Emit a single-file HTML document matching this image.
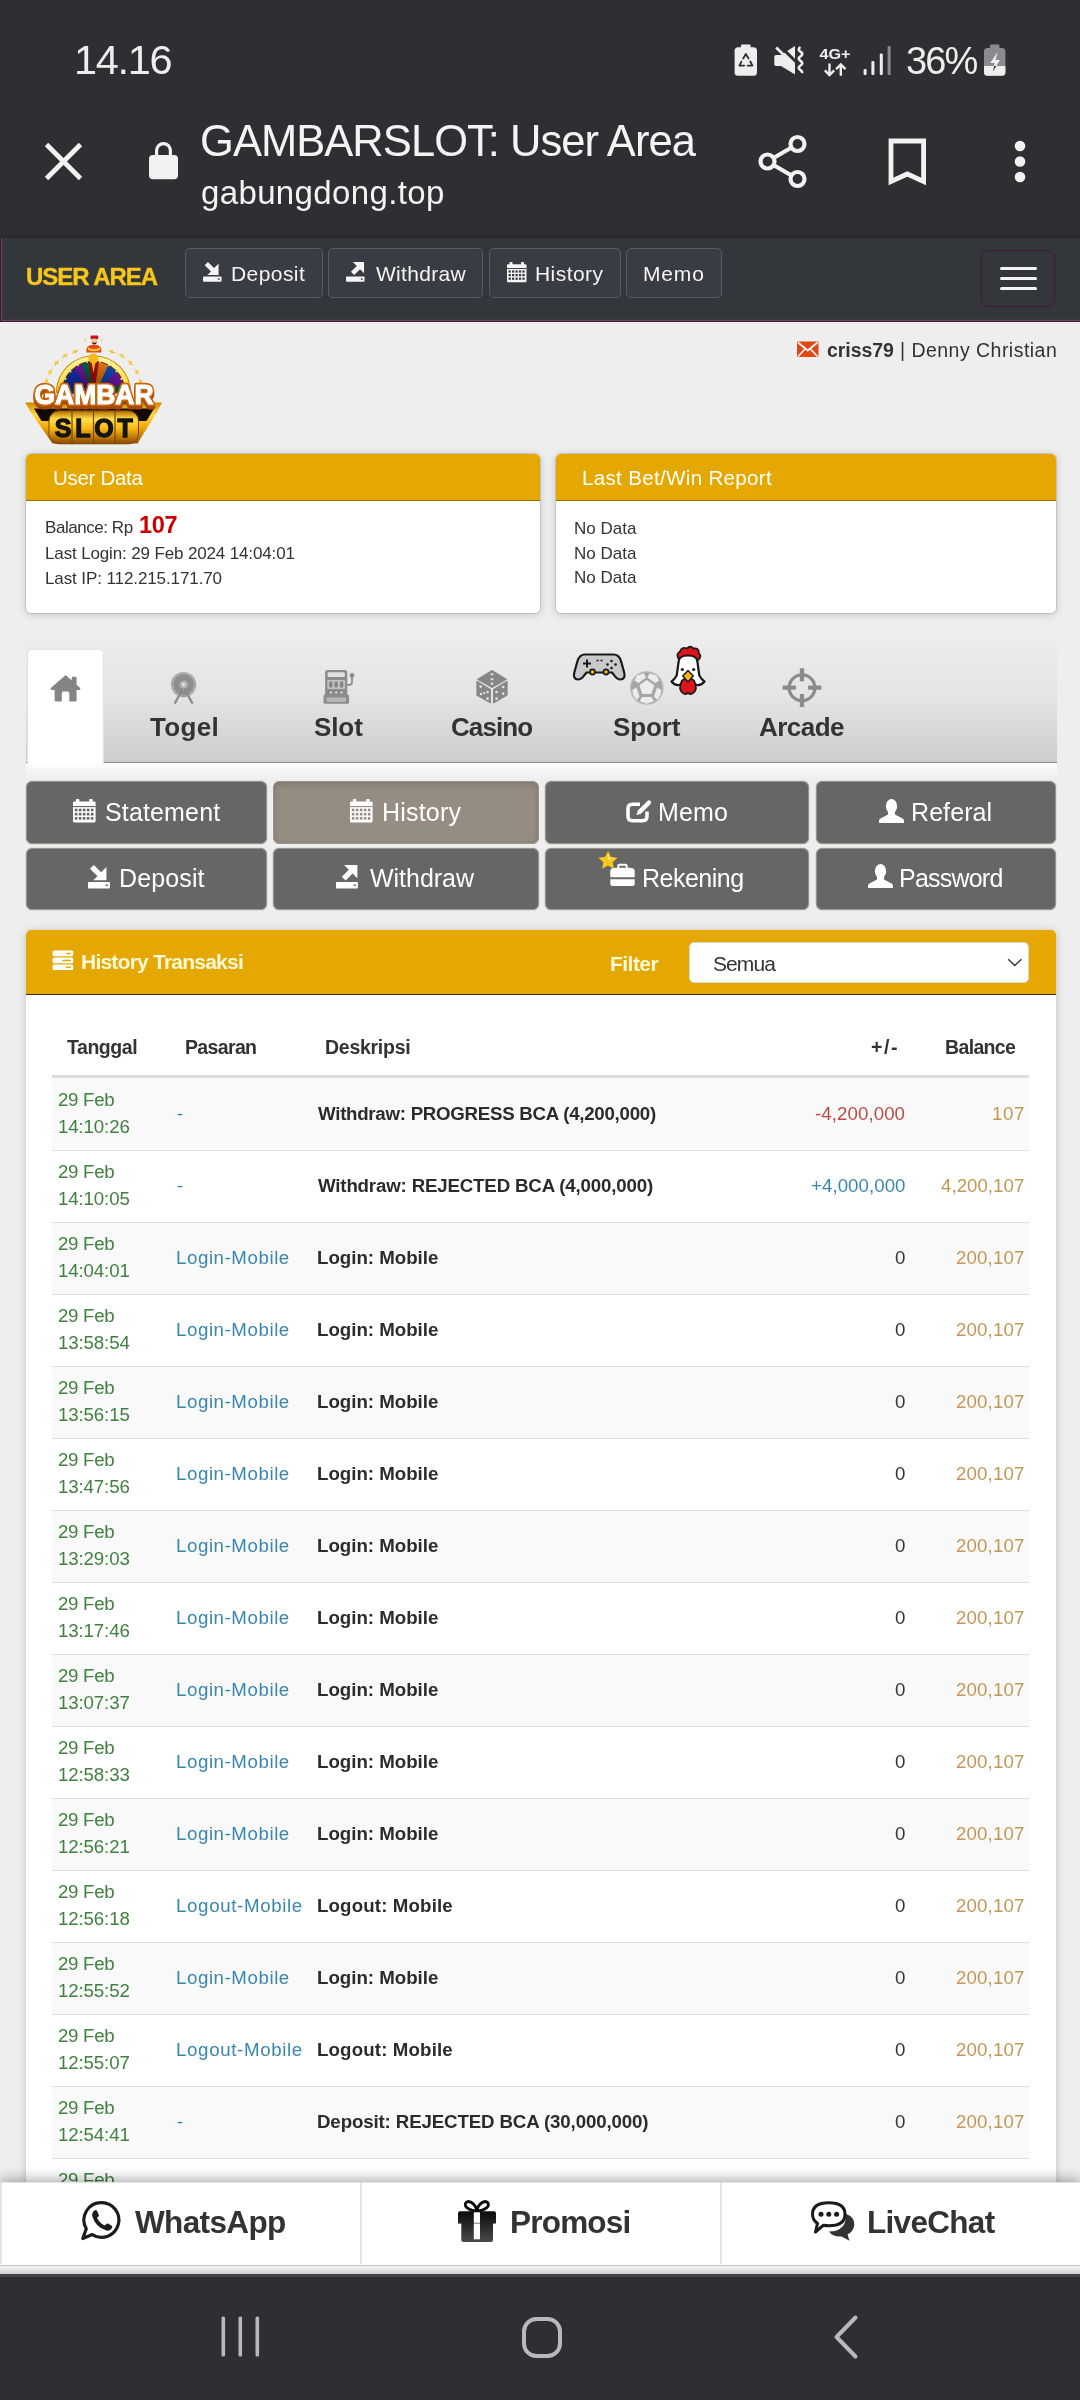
<!DOCTYPE html>
<html lang="id"><head><meta charset="utf-8"><title>GAMBARSLOT: User Area</title>
<style>
*{box-sizing:border-box;margin:0;padding:0}
html,body{width:1080px;height:2400px;overflow:hidden;background:#eeeeee}
body{position:relative;font-family:'Liberation Sans',sans-serif;color:#333}
.abs{position:absolute}
svg{position:absolute;overflow:visible;will-change:transform}
.nb{position:absolute;top:248px;height:50px;background:#3a3c43;border:1px solid #575b64;border-radius:5px}
.mb{position:absolute;background:#666;border:1px solid #9a948c;border-radius:6px;box-shadow:0 0 0 0.6px #d8d0c6}
.row{position:absolute;left:52px;width:977px;height:72px;border-top:1px solid #ddd}
.row.o{background:#f9f9f9}
</style></head><body>

<div class="abs" style="left:0;top:0;width:1080px;height:237px;background:#2e2f33"></div>
<div class="abs" style="left:0;top:234.500px;width:1080px;height:3.300px;background:#2a2b2e"></div>
<div style="position:absolute;will-change:transform;top:36.20px;font-size:41.5px;line-height:47px;height:47px;color:#eeeeee;white-space:pre;letter-spacing:-1.32px;left:74.49px;">14.16</div>
<div style="position:absolute;will-change:transform;top:39.60px;font-size:38px;line-height:42px;height:42px;color:#eeeeee;white-space:pre;letter-spacing:-1.92px;left:906.08px;">36%</div>
<svg style="left:730px;top:40px" width="290" height="40" viewBox="730 40 290 40">
<g fill="#eeeeee">
<rect x="741" y="44.4" width="9.6" height="4" rx="1"/>
<rect x="734.6" y="47.2" width="22.4" height="28.6" rx="3.5"/>
</g>
<g fill="none" stroke="#2e2f33" stroke-width="1.8" stroke-linejoin="round" stroke-linecap="round">
<path d="M743.2 58.5 L745.8 54 L748.6 58.6"/><path d="M750.3 61.5 L752.4 65.6 L747.6 65.6"/><path d="M744.2 65.6 L739.4 65.6 L741.4 61.6"/>
</g>
<g fill="#eeeeee">
<path d="M776 55 H781 L795 46 V74.600 L781 66 H776 Q774.300 66 774.300 64.300 V56.700 Q774.300 55 776 55 Z"/>
</g>
<path d="M778.600 44.600 L797.500 63.200" stroke="#2e2f33" stroke-width="3" fill="none"/>
<path d="M776.200 47.600 L786 57.200" stroke="#eeeeee" stroke-width="2.800" fill="none"/>
<path d="M800.500 47 q-3.600 2.400 0 4.700 q3.600 2.300 0 4.600 q-3.600 2.300 0 4.600 q3.600 2.300 0 4.600 q-3.600 2.300 0 4.600 q2 1.300 1.500 3" stroke="#eeeeee" stroke-width="2.600" fill="none"/>
<text x="819.5" y="58.8" font-family="Liberation Sans, sans-serif" font-weight="700" font-size="15.4" fill="#eeeeee" textLength="31" lengthAdjust="spacingAndGlyphs">4G+</text>
<g stroke="#eeeeee" stroke-width="2.4" fill="none" stroke-linecap="butt" stroke-linejoin="miter">
<path d="M829.5 63.5 V74.5 M824.8 70.3 L829.5 75 L834.2 70.3"/>
<path d="M840.8 75.8 V65 M836.1 69.2 L840.8 64.5 L845.5 69.2"/>
</g>
<g fill="#eeeeee">
<rect x="863.6" y="68.9" width="3" height="6" rx="1"/>
<rect x="871.4" y="61" width="3" height="13.9" rx="1"/>
<rect x="879.8" y="53.6" width="3" height="21.3" rx="1"/>
</g>
<rect x="887.6" y="46" width="3" height="28.9" rx="1" fill="#8a8b8e"/>
<g>
<rect x="990" y="44.4" width="9.4" height="5" rx="1" fill="#8a8b8e"/>
<rect x="984" y="48" width="21.4" height="27.8" rx="3.5" fill="#8a8b8e"/>
<path d="M984 66 H1005.4 V72.3 a3.5 3.5 0 0 1 -3.5 3.5 H987.5 a3.5 3.5 0 0 1 -3.5 -3.5 Z" fill="#eeeeee"/>
<path d="M997.5 52 L990.3 63 H994.6 L992.8 71.5 L1000 60 H995.6 Z" fill="#eeeeee"/>
<path d="M994.3 66 L992.8 71.5 L996.4 66 Z" fill="#2e2f33"/>
</g>
</svg>
<svg style="left:40px;top:130px" width="1040" height="70" viewBox="40 130 1040 70">
<path d="M46.5 144.5 L80.5 178.5 M80.5 144.5 L46.5 178.5" stroke="#f2f2f2" stroke-width="4.8" fill="none"/>
<rect x="149" y="155" width="29" height="24.3" rx="4" fill="#f2f2f2"/>
<path d="M156.6 156 V150.5 a6.9 6.9 0 0 1 13.8 0 V156" stroke="#f2f2f2" stroke-width="3.2" fill="none"/>
<g stroke="#f2f2f2" stroke-width="4.2" fill="none">
<path d="M767.5 161.5 L797.5 144 M767.5 161.5 L797.5 179"/>
<circle cx="797.5" cy="144" r="7" fill="#2e2f33"/><circle cx="767.5" cy="161.5" r="7" fill="#2e2f33"/><circle cx="797.5" cy="179" r="7" fill="#2e2f33"/>
</g>
<path d="M891 141 H923.6 V181.5 L907.3 174 L891 181.5 Z" stroke="#f2f2f2" stroke-width="4.8" fill="none" stroke-linejoin="miter"/>
<g fill="#f2f2f2"><circle cx="1020" cy="146" r="5.3"/><circle cx="1020" cy="161.5" r="5.3"/><circle cx="1020" cy="177" r="5.3"/></g>
</svg>
<div style="position:absolute;will-change:transform;top:116.80px;font-size:43.5px;line-height:48px;height:48px;color:#f4f4f4;white-space:pre;letter-spacing:-0.95px;left:200.12px;">GAMBARSLOT: User Area</div>
<div style="position:absolute;will-change:transform;top:173.70px;font-size:33px;line-height:37px;height:37px;color:#f4f4f4;white-space:pre;letter-spacing:0.36px;left:201.08px;">gabungdong.top</div>
<div class="abs" style="left:0;top:237.800px;width:1080px;height:84px;background:#33363b;border-bottom:1px solid #3d1a30;border-left:1px solid #3d1a30;box-shadow:inset 1.200px -1.200px 0 #65475a"></div>
<div style="position:absolute;will-change:transform;top:262.90px;font-size:24px;line-height:27px;height:27px;color:#f7c61b;white-space:pre;font-weight:700;letter-spacing:-1.05px;left:26.46px;-webkit-text-stroke:0.35px #f7c61b;">USER AREA</div>
<div class="nb" style="left:185.3px;width:137.39999999999998px"></div>
<div class="nb" style="left:328.3px;width:155.0px"></div>
<div class="nb" style="left:488.8px;width:132.40000000000003px"></div>
<div class="nb" style="left:626.3px;width:95.70000000000005px"></div>
<div style="position:absolute;will-change:transform;top:262.00px;font-size:21px;line-height:23px;height:23px;color:#f4f4f4;white-space:pre;letter-spacing:0.43px;left:230.62px;">Deposit</div>
<div style="position:absolute;will-change:transform;top:262.00px;font-size:21px;line-height:23px;height:23px;color:#f4f4f4;white-space:pre;letter-spacing:0.3px;left:375.75px;">Withdraw</div>
<div style="position:absolute;will-change:transform;top:262.00px;font-size:21px;line-height:23px;height:23px;color:#f4f4f4;white-space:pre;letter-spacing:0.44px;left:535.02px;">History</div>
<div style="position:absolute;will-change:transform;top:262.00px;font-size:21px;line-height:23px;height:23px;color:#f4f4f4;white-space:pre;letter-spacing:0.83px;left:643.32px;">Memo</div>
<svg style="left:202.7px;top:262px" width="19" height="19.95" viewBox="0 0 20 21">
<rect x="0" y="15.2" width="19.5" height="5.6" rx="0.8" fill="#f4f4f4"/>
<rect x="15.6" y="17.3" width="2" height="1.4" fill="#3a3c43"/>
<path d="M1.800 3.400 L5.200 0 L11.600 6.400 L16.400 1.800 V13.600 H4.600 L8.400 10 Z" fill="#f4f4f4"/>
</svg>
<svg style="left:346px;top:262px" width="19" height="19.95" viewBox="0 0 20 21">
<rect x="0" y="15.2" width="19.5" height="5.6" rx="0.8" fill="#f4f4f4"/>
<rect x="15.6" y="17.3" width="2" height="1.4" fill="#3a3c43"/>
<path d="M7.200 0 H19 V11.800 L14.800 7.600 L8.600 13.800 L5.200 10.400 L11.400 4.200 Z" fill="#f4f4f4"/>
</svg>
<svg style="left:507px;top:262px" width="19.5" height="20.475" viewBox="0 0 20 21">
<rect x="2.6" y="0" width="3" height="4" rx="0.6" fill="#f4f4f4"/><rect x="14.4" y="0" width="3" height="4" rx="0.6" fill="#f4f4f4"/>
<rect x="0" y="2.2" width="20" height="18.6" rx="1" fill="#f4f4f4"/>
<rect x="0" y="6.2" width="20" height="1" fill="#3a3c43"/>
<rect x="1.60" y="8.60" width="2.3" height="2.3" fill="#3a3c43"/><rect x="5.15" y="8.60" width="2.3" height="2.3" fill="#3a3c43"/><rect x="8.70" y="8.60" width="2.3" height="2.3" fill="#3a3c43"/><rect x="12.25" y="8.60" width="2.3" height="2.3" fill="#3a3c43"/><rect x="15.80" y="8.60" width="2.3" height="2.3" fill="#3a3c43"/><rect x="1.60" y="12.30" width="2.3" height="2.3" fill="#3a3c43"/><rect x="5.15" y="12.30" width="2.3" height="2.3" fill="#3a3c43"/><rect x="8.70" y="12.30" width="2.3" height="2.3" fill="#3a3c43"/><rect x="12.25" y="12.30" width="2.3" height="2.3" fill="#3a3c43"/><rect x="15.80" y="12.30" width="2.3" height="2.3" fill="#3a3c43"/><rect x="1.60" y="16.00" width="2.3" height="2.3" fill="#3a3c43"/><rect x="5.15" y="16.00" width="2.3" height="2.3" fill="#3a3c43"/><rect x="8.70" y="16.00" width="2.3" height="2.3" fill="#3a3c43"/><rect x="12.25" y="16.00" width="2.3" height="2.3" fill="#3a3c43"/><rect x="15.80" y="16.00" width="2.3" height="2.3" fill="#3a3c43"/>
</svg>
<div class="abs" style="left:980.600px;top:249.700px;width:74.400px;height:57px;border:1.300px solid #42192f;border-radius:7px;background:#33363b"></div>
<div class="abs" style="left:1000px;top:267px;width:36.5px;height:3.4px;background:#f4f4f4;border-radius:1.5px"></div>
<div class="abs" style="left:1000px;top:277px;width:36.5px;height:3.4px;background:#f4f4f4;border-radius:1.5px"></div>
<div class="abs" style="left:1000px;top:287px;width:36.5px;height:3.4px;background:#f4f4f4;border-radius:1.5px"></div>
<svg style="left:20px;top:330px" width="150" height="120" viewBox="20 330 150 120">
<defs>
<linearGradient id="gold" x1="0" y1="0" x2="0" y2="1"><stop offset="0" stop-color="#ffe763"/><stop offset="0.5" stop-color="#f3ae0e"/><stop offset="1" stop-color="#b86a00"/></linearGradient>
<linearGradient id="gold2" x1="0" y1="0" x2="0" y2="1"><stop offset="0" stop-color="#d28600"/><stop offset="0.3" stop-color="#ffd83e"/><stop offset="0.6" stop-color="#f3a90c"/><stop offset="1" stop-color="#9a5200"/></linearGradient>
<linearGradient id="gold3" x1="0" y1="0" x2="0" y2="1"><stop offset="0" stop-color="#b06a00"/><stop offset="0.25" stop-color="#ffdf4a"/><stop offset="0.55" stop-color="#f7b512"/><stop offset="1" stop-color="#8a4800"/></linearGradient>
<linearGradient id="ring" x1="0" y1="0" x2="0" y2="1"><stop offset="0" stop-color="#fff7a8"/><stop offset="0.6" stop-color="#ffe45c"/><stop offset="1" stop-color="#f0b020"/></linearGradient>
<radialGradient id="wsh" cx="0.5" cy="1" r="1"><stop offset="0" stop-color="#000" stop-opacity="0.45"/><stop offset="1" stop-color="#000" stop-opacity="0"/></radialGradient>
</defs>
<path transform="translate(46.4 381.5) rotate(286)" d="M-4.300 1 L0.700 -2.400 L0.100 -0.400 L4.300 -1 L-0.700 2.400 L-0.100 0.400 Z" fill="#f3c01c"/><path transform="translate(50.2 372.0) rotate(298)" d="M-4.300 1 L0.700 -2.400 L0.100 -0.400 L4.300 -1 L-0.700 2.400 L-0.100 0.400 Z" fill="#f3c01c"/><path transform="translate(56.5 362.9) rotate(311)" d="M-4.300 1 L0.700 -2.400 L0.100 -0.400 L4.300 -1 L-0.700 2.400 L-0.100 0.400 Z" fill="#f3c01c"/><path transform="translate(65.0 355.8) rotate(324)" d="M-4.300 1 L0.700 -2.400 L0.100 -0.400 L4.300 -1 L-0.700 2.400 L-0.100 0.400 Z" fill="#f3c01c"/><path transform="translate(75.1 351.7) rotate(337)" d="M-4.300 1 L0.700 -2.400 L0.100 -0.400 L4.300 -1 L-0.700 2.400 L-0.100 0.400 Z" fill="#f3c01c"/><path transform="translate(111.9 351.7) rotate(383)" d="M-4.300 1 L0.700 -2.400 L0.100 -0.400 L4.300 -1 L-0.700 2.400 L-0.100 0.400 Z" fill="#f3c01c"/><path transform="translate(122.0 355.8) rotate(396)" d="M-4.300 1 L0.700 -2.400 L0.100 -0.400 L4.300 -1 L-0.700 2.400 L-0.100 0.400 Z" fill="#f3c01c"/><path transform="translate(130.5 362.9) rotate(409)" d="M-4.300 1 L0.700 -2.400 L0.100 -0.400 L4.300 -1 L-0.700 2.400 L-0.100 0.400 Z" fill="#f3c01c"/><path transform="translate(136.8 372.0) rotate(422)" d="M-4.300 1 L0.700 -2.400 L0.100 -0.400 L4.300 -1 L-0.700 2.400 L-0.100 0.400 Z" fill="#f3c01c"/><path transform="translate(140.6 381.5) rotate(434)" d="M-4.300 1 L0.700 -2.400 L0.100 -0.400 L4.300 -1 L-0.700 2.400 L-0.100 0.400 Z" fill="#f3c01c"/>
<path d="M55.800 393 A37.700 37.700 0 0 1 131.200 393 Z" fill="#c88a08"/>
<path d="M56.800 393 A36.700 36.700 0 0 1 130.200 393 Z" fill="url(#ring)"/>
<path d="M61.300 393 A32.200 32.200 0 0 1 125.700 393 Z" fill="#5e3400"/>
<path d="M93.5 398 L63.3 392.0 A30.2 30.2 0 0 1 74.6 368.5 Z" fill="#1430a8"/><path d="M93.5 398 L74.6 368.5 A30.2 30.2 0 0 1 81.6 364.2 Z" fill="#6a14a6"/><path d="M93.5 398 L81.6 364.2 A30.2 30.2 0 0 1 89.1 362.1 Z" fill="#0b5a40"/><path d="M93.5 398 L89.1 362.1 A30.2 30.2 0 0 1 98.9 362.3 Z" fill="#a80e10"/><path d="M93.5 398 L98.9 362.3 A30.2 30.2 0 0 1 108.2 365.6 Z" fill="#e27412"/><path d="M93.5 398 L108.2 365.6 A30.2 30.2 0 0 1 115.9 371.7 Z" fill="#1248b4"/><path d="M93.5 398 L115.9 371.7 A30.2 30.2 0 0 1 122.4 383.2 Z" fill="#7416ac"/><path d="M93.5 398 L122.4 383.2 A30.2 30.2 0 0 1 123.7 392.0 Z" fill="#0f6a3a"/>
<path d="M63.300 392 A30.200 30.200 0 0 1 123.700 392 Z" fill="url(#wsh)"/>
<circle cx="65.6" cy="379.0" r="0.9" fill="#fff3c0"/><circle cx="70.6" cy="371.4" r="0.9" fill="#fff3c0"/><circle cx="78.1" cy="365.3" r="0.9" fill="#fff3c0"/><circle cx="87.1" cy="361.9" r="0.9" fill="#fff3c0"/><circle cx="99.9" cy="361.9" r="0.9" fill="#fff3c0"/><circle cx="108.9" cy="365.3" r="0.9" fill="#fff3c0"/><circle cx="116.4" cy="371.4" r="0.9" fill="#fff3c0"/><circle cx="121.4" cy="379.0" r="0.9" fill="#fff3c0"/>
<circle cx="93.500" cy="358.500" r="5" fill="#f7b714"/>
<path d="M91.500 361.500 L93.500 373 L95.500 361.500 Z" fill="#f7b714"/>
<g>
<path d="M84.500 338.500 l1.600 1 l-1 0.600 l1.300 1.500 l-2.400 -1.100 l1 -0.700 Z M102.500 338.500 l-1.600 1 l1 0.600 l-1.300 1.500 l2.400 -1.100 l-1 -0.700 Z" fill="#f3c01c"/>
<rect x="90.600" y="335.600" width="7.600" height="3.600" rx="0.800" fill="#c8141a"/>
<circle cx="94.300" cy="341.600" r="3.100" fill="#f3c29a"/>
<path d="M91.500 342.200 Q94.300 346.600 97.100 342.200 Q94.300 343.400 91.500 342.200 Z" fill="#2a1a10"/>
<path d="M86.300 352.600 Q85.300 344.600 94 344.800 Q102.500 344.600 101.300 352.600 Z" fill="#e2481a"/>
<path d="M88 347.600 Q94 350.800 100 347.600 L100 350 Q94 352.400 88 350 Z" fill="#f6c62a"/>
</g>
<path d="M25.300 402.500 H162 L157 412 L137.500 443.500 H52.500 L30.500 412 Z" fill="url(#gold2)"/>
<path d="M34 408.500 H154 L146.500 421 H41.500 Z" fill="#120a00"/>
<rect x="49" y="410.800" width="89.500" height="33" rx="10" fill="url(#gold3)" stroke="#7a4600" stroke-width="1"/>
<g stroke="#7a4600" stroke-width="1.200"><path d="M72 411.500 V443.500 M93.500 411 V443.800 M115 411.500 V443.500"/></g>
<text x="93.700" y="437" text-anchor="middle" font-family="Liberation Sans, sans-serif" font-weight="700" font-size="25" fill="#141414" stroke="#141414" stroke-width="1.300" textLength="78" lengthAdjust="spacing">SLOT</text>
<text x="94" y="406.800" text-anchor="middle" font-family="Liberation Sans, sans-serif" font-weight="700" font-size="28.500" fill="#a4480a" stroke="#a4480a" stroke-width="5" stroke-linejoin="round" textLength="119" lengthAdjust="spacingAndGlyphs">GAMBAR</text>
<text x="94" y="404" text-anchor="middle" font-family="Liberation Sans, sans-serif" font-weight="700" font-size="28.500" fill="#ffffff" stroke="#c8650f" stroke-width="4.600" paint-order="stroke" stroke-linejoin="round" textLength="119" lengthAdjust="spacingAndGlyphs">GAMBAR</text>
<text x="94" y="404" text-anchor="middle" font-family="Liberation Sans, sans-serif" font-weight="700" font-size="28.500" fill="#ffffff" stroke="#ffffff" stroke-width="1.100" stroke-linejoin="round" textLength="119" lengthAdjust="spacingAndGlyphs">GAMBAR</text>
</svg>
<svg style="left:797px;top:341px" width="22" height="17" viewBox="0 0 22 17">
<rect x="0" y="0.500" width="21.500" height="15.500" rx="1" fill="#dd4814"/>
<path d="M1 1.500 L10.750 9.500 L20.500 1.500" stroke="#eeeeee" stroke-width="2" fill="none"/>
<path d="M1 15.500 L8 8 M20.500 15.500 L13.500 8" stroke="#eeeeee" stroke-width="1.800" fill="none"/>
</svg>
<div style="position:absolute;will-change:transform;top:339.20px;font-size:19.5px;line-height:22px;height:22px;color:#333;white-space:pre;font-weight:700;letter-spacing:-0.05px;left:826.77px;">criss79</div>
<div style="position:absolute;will-change:transform;top:339.20px;font-size:19.5px;line-height:22px;height:22px;color:#333;white-space:pre;letter-spacing:0.47px;left:899.59px;">| Denny Christian</div>
<div class="abs" style="left:26px;top:453.5px;width:514px;height:159.0px;background:#fff;border-radius:5px;box-shadow:0 1px 8px rgba(0,0,0,0.2),0 0 0 1px rgba(0,0,0,0.1);overflow:hidden"><div style="height:47px;background:#e5a802;border-bottom:1.5px solid #9a7000"></div></div>
<div class="abs" style="left:556px;top:453.5px;width:499.5px;height:159.0px;background:#fff;border-radius:5px;box-shadow:0 1px 8px rgba(0,0,0,0.2),0 0 0 1px rgba(0,0,0,0.1);overflow:hidden"><div style="height:47px;background:#e5a802;border-bottom:1.5px solid #9a7000"></div></div>
<div style="position:absolute;will-change:transform;top:466.00px;font-size:20.5px;line-height:23px;height:23px;color:#fff;white-space:pre;letter-spacing:-0.3px;left:53.00px;">User Data</div>
<div style="position:absolute;will-change:transform;top:466.00px;font-size:20.5px;line-height:23px;height:23px;color:#fff;white-space:pre;letter-spacing:0.35px;left:581.50px;">Last Bet/Win Report</div>
<div style="position:absolute;will-change:transform;top:517.50px;font-size:17px;line-height:19px;height:19px;color:#333;white-space:pre;letter-spacing:-0.45px;left:44.50px;">Balance: Rp</div>
<div style="position:absolute;will-change:transform;top:511.50px;font-size:23.5px;line-height:26px;height:26px;color:#cc0000;white-space:pre;font-weight:700;letter-spacing:-0.3px;left:139.00px;">107</div>
<div style="position:absolute;will-change:transform;top:544.00px;font-size:17px;line-height:19px;height:19px;color:#333;white-space:pre;letter-spacing:-0.14px;left:44.50px;">Last Login: 29 Feb 2024 14:04:01</div>
<div style="position:absolute;will-change:transform;top:569.00px;font-size:17px;line-height:19px;height:19px;color:#333;white-space:pre;letter-spacing:-0.1px;left:44.50px;">Last IP: 112.215.171.70</div>
<div style="position:absolute;will-change:transform;top:518.50px;font-size:17px;line-height:19px;height:19px;color:#333;white-space:pre;left:573.50px;">No Data</div>
<div style="position:absolute;will-change:transform;top:543.50px;font-size:17px;line-height:19px;height:19px;color:#333;white-space:pre;left:573.50px;">No Data</div>
<div style="position:absolute;will-change:transform;top:567.50px;font-size:17px;line-height:19px;height:19px;color:#333;white-space:pre;left:573.50px;">No Data</div>
<div class="abs" style="left:26px;top:637px;width:1030.500px;height:126px;background:linear-gradient(#eeeeee,#eaeaea 10%,#e5e5e5 45%,#cdcdcd);border-bottom:1.500px solid #8c8c8c"></div>
<div class="abs" style="left:26px;top:763px;width:1030.500px;height:17px;background:linear-gradient(#ffffff,#f6f6f6 40%,#eeeeee)"></div>
<div class="abs" style="left:26.500px;top:648.500px;width:77px;height:115px;background:#fff;border-radius:5px 5px 0 0;border:1px solid #e2e2e2;border-bottom:none"></div>
<svg style="left:48px;top:672px" width="36" height="32" viewBox="48 672 36 32">
<path d="M65.600 675 L50.800 688 Q50 690 52.500 690 H54.600 V700 Q54.600 701.600 56.200 701.600 H61.800 V693 Q61.800 691.400 63.400 691.400 H67.700 Q69.300 691.400 69.300 693 V701.600 H75 Q76.600 701.600 76.600 700 V690 H78.500 Q81 690 80.100 688 L76.600 684.800 V678 Q76.600 676.700 75 676.700 H73.300 Q71.700 676.700 71.700 678 V680.500 Z" fill="#848484"/>
</svg>
<div style="position:absolute;will-change:transform;top:711.90px;font-size:26px;line-height:30px;height:30px;color:#333;white-space:pre;font-weight:700;letter-spacing:0.34px;left:149.74px;">Togel</div>
<div style="position:absolute;will-change:transform;top:711.90px;font-size:26px;line-height:30px;height:30px;color:#333;white-space:pre;font-weight:700;letter-spacing:-0.1px;left:313.69px;">Slot</div>
<div style="position:absolute;will-change:transform;top:711.90px;font-size:26px;line-height:30px;height:30px;color:#333;white-space:pre;font-weight:700;letter-spacing:-0.93px;left:451.46px;">Casino</div>
<div style="position:absolute;will-change:transform;top:711.90px;font-size:26px;line-height:30px;height:30px;color:#333;white-space:pre;font-weight:700;letter-spacing:-0.1px;left:613.28px;">Sport</div>
<div style="position:absolute;will-change:transform;top:711.90px;font-size:26px;line-height:30px;height:30px;color:#333;white-space:pre;font-weight:700;letter-spacing:-0.53px;left:759.35px;">Arcade</div>
<svg style="left:168px;top:668px" width="32" height="38" viewBox="168 668 32 38">
<circle cx="183.600" cy="684.600" r="12.700" fill="#b2b2b2"/>
<circle cx="183.600" cy="684.600" r="10.300" fill="#8e8e8e"/>
<circle cx="183.600" cy="684.600" r="11.500" fill="none" stroke="#9c9c9c" stroke-width="1" stroke-dasharray="3 2"/>
<circle cx="183.600" cy="684.600" r="4.200" fill="#b4b4b4"/>
<circle cx="183.600" cy="684.600" r="1.300" fill="#f4f4f4"/>
<circle cx="183.600" cy="689.600" r="1" fill="#e8e8e8"/>
<path d="M183 688.500 L174.600 703.600 M184.200 688.500 L192.600 703.600" stroke="#8a8a8a" stroke-width="2.200" fill="none"/>
<path d="M181.500 696.300 H185.700" stroke="#9a9a9a" stroke-width="1.600"/>
</svg>
<svg style="left:322px;top:668px" width="34" height="38" viewBox="322 668 34 38">
<rect x="325.100" y="670.100" width="22.200" height="27" rx="2.600" fill="#8c8c8c"/>
<rect x="327.600" y="672.300" width="17.200" height="4.600" rx="1" fill="#e0e0e0"/>
<rect x="327.300" y="680" width="17.800" height="9" rx="1.200" fill="#c2c2c2"/>
<g fill="#858585"><ellipse cx="330.800" cy="684.500" rx="1.800" ry="3.300"/><ellipse cx="336.200" cy="684.500" rx="1.800" ry="3.300"/><ellipse cx="341.600" cy="684.500" rx="1.800" ry="3.300"/></g>
<g fill="#f0f0f0"><circle cx="331" cy="692.600" r="1"/><circle cx="336.200" cy="692.600" r="1"/><circle cx="341.500" cy="692.600" r="1"/></g>
<rect x="323.500" y="694.600" width="25.500" height="9.100" rx="1.500" fill="#8c8c8c"/>
<rect x="326.500" y="697.400" width="19.500" height="4.500" rx="0.800" fill="#b6b6b6"/>
<circle cx="352" cy="675.400" r="2.400" fill="#8c8c8c"/>
<path d="M352 677 V682.500 Q352 684.800 349.500 684.800 H347" stroke="#8c8c8c" stroke-width="1.700" fill="none"/>
</svg>
<svg style="left:474px;top:668px" width="36" height="38" viewBox="474 668 36 38">
<g fill="#878787" stroke="#878787" stroke-width="1" stroke-linejoin="round">
<path d="M492 670.400 L506.600 679.300 L492 687.600 L477.400 679.300 Z"/>
<path d="M476.900 681.200 L490.500 689.400 V703 L476.900 695.300 Z"/>
<path d="M507.100 681.200 L493.500 689.400 V703 L507.100 695.300 Z"/>
</g>
<g fill="#e6e6e6"><ellipse cx="492" cy="674.300" rx="1.500" ry="1"/><ellipse cx="492" cy="679.200" rx="1.500" ry="1"/><ellipse cx="492" cy="683.700" rx="1.400" ry="1.100"/>
<circle cx="480.600" cy="686.600" r="1.300"/><circle cx="481" cy="694" r="1.200"/><circle cx="484.200" cy="693" r="1.100"/><circle cx="487.600" cy="692" r="1.200"/><circle cx="487.600" cy="698.600" r="1.300"/>
<circle cx="503.200" cy="687" r="1.300"/><circle cx="496.600" cy="692" r="1.300"/><circle cx="503.200" cy="693.600" r="1.300"/><circle cx="496.600" cy="698.600" r="1.300"/></g>
</svg>
<svg style="left:572px;top:650px" width="56" height="34" viewBox="572 650 56 34">
<path d="M585 654.500 H613.500 Q619 654.500 621 661 L624.300 673 Q625.500 679 620.500 679.500 Q617 679.500 614 675 L612 672.500 H586.500 L584.500 675 Q581.500 679.500 578 679.500 Q573 679 574.200 673 L577.500 661 Q579.500 654.500 585 654.500 Z" fill="#c9c9c9" stroke="#1a1a1a" stroke-width="2.200" stroke-linejoin="round"/>
<path d="M583 663.500 H591 M587 659.500 V667.500" stroke="#1a1a1a" stroke-width="2"/>
<circle cx="611.500" cy="661" r="1.300" fill="#1a1a1a"/><circle cx="615.500" cy="664.500" r="1.300" fill="#1a1a1a"/><circle cx="607.500" cy="664.500" r="1.300" fill="#1a1a1a"/><circle cx="611.500" cy="668" r="1.300" fill="#1a1a1a"/>
<circle cx="592.500" cy="672" r="2.600" fill="#e8b81a" stroke="#1a1a1a" stroke-width="1.600"/><circle cx="606" cy="672" r="2.600" fill="#e8b81a" stroke="#1a1a1a" stroke-width="1.600"/>
<path d="M596.500 660.500 H598.500 M600.500 660.500 H602.500" stroke="#1a1a1a" stroke-width="1.400"/>
</svg>
<svg style="left:628px;top:669px" width="38" height="38" viewBox="628 669 38 38">
<circle cx="646.800" cy="688" r="16.800" fill="#b9b9b9"/>
<circle cx="646.800" cy="688" r="15.400" fill="#a6a6a6"/>
<g fill="#ececec"><path d="M646.800 680 L654.200 685.300 L651.400 694 H642.200 L639.400 685.300 Z"/>
<path d="M637 675.500 L644 673.300 L646 677.500 L638.500 683 L634.500 680.500 Z"/><path d="M656.600 675.500 L649.600 673.300 L647.600 677.500 L655.100 683 L659.100 680.500 Z"/>
<path d="M632.300 690 L636.500 687.500 L639.600 696.500 L636.500 700 L633.200 695 Z"/><path d="M661.300 690 L657.100 687.500 L654 696.500 L657.100 700 L660.400 695 Z"/>
<path d="M642 697 H651.600 L654 701.300 L646.800 703.800 L639.600 701.300 Z"/></g>
</svg>
<svg style="left:668px;top:642px" width="40" height="58" viewBox="668 642 40 58">
<path d="M679.500 660 Q675 654.500 680 651.500 Q681.500 646.500 687 648.500 Q690 644.800 693.500 648.500 Q699 647.500 698.800 653 Q702.500 657 697.500 660.500 Z" fill="#e0141c" stroke="#1a1a1a" stroke-width="1.800" stroke-linejoin="round"/>
<path d="M678.500 662.500 Q678.500 655.500 688 655.500 Q697.500 655.500 697.500 662.500 L699.300 675.500 Q701.500 679.500 704.500 681.500 Q700.500 686.500 695 684.500 L681 684.500 Q675.500 686.500 671.500 681.500 Q674.500 679.500 676.700 675.500 Z" fill="#ffffff" stroke="#1a1a1a" stroke-width="2.200" stroke-linejoin="round"/>
<path d="M682 680.500 Q677.500 690 683.500 693.500 Q686.500 695 688 692.500 Q689.500 695 692.500 693.500 Q698.500 690 694 680.500 L688 677 Z" fill="#e0141c" stroke="#1a1a1a" stroke-width="1.800" stroke-linejoin="round"/>
<path d="M688 670.500 L693.200 676 L688 682 L682.800 676 Z" fill="#f2b61a" stroke="#1a1a1a" stroke-width="1.500" stroke-linejoin="round"/>
<circle cx="682.300" cy="669.500" r="1.600" fill="#1a1a1a"/><circle cx="693.700" cy="669.500" r="1.600" fill="#1a1a1a"/>
</svg>
<svg style="left:780px;top:666px" width="44" height="44" viewBox="780 666 44 44">
<circle cx="802" cy="687.700" r="12.900" fill="none" stroke="#8b8b8b" stroke-width="3.200"/>
<path d="M802 668.300 V681.300 M802 693.900 V706.900 M782.600 687.700 H795.900 M808.100 687.700 H821.400" stroke="#8b8b8b" stroke-width="4.300"/>
</svg>
<div class="mb" style="left:26px;top:781px;width:240.5px;height:63px;background:#666666;"></div>
<div class="mb" style="left:273px;top:781px;width:266px;height:63px;background:#968d82;box-shadow:inset 0 2px 6px rgba(0,0,0,0.18);"></div>
<div class="mb" style="left:545px;top:781px;width:263.5px;height:63px;background:#666666;"></div>
<div class="mb" style="left:815.5px;top:781px;width:240.0px;height:63px;background:#666666;"></div>
<div class="mb" style="left:26px;top:847.5px;width:240.5px;height:62.5px;background:#666666;"></div>
<div class="mb" style="left:273px;top:847.5px;width:266px;height:62.5px;background:#666666;"></div>
<div class="mb" style="left:545px;top:847.5px;width:263.5px;height:62.5px;background:#666666;"></div>
<div class="mb" style="left:815.5px;top:847.5px;width:240.0px;height:62.5px;background:#666666;"></div>
<div style="position:absolute;will-change:transform;top:797.80px;font-size:25px;line-height:28px;height:28px;color:#ffffff;white-space:pre;letter-spacing:0.15px;left:104.67px;">Statement</div>
<div style="position:absolute;will-change:transform;top:797.80px;font-size:25px;line-height:28px;height:28px;color:#ffffff;white-space:pre;letter-spacing:0.2px;left:381.50px;">History</div>
<div style="position:absolute;will-change:transform;top:797.80px;font-size:25px;line-height:28px;height:28px;color:#ffffff;white-space:pre;letter-spacing:0.19px;left:658.00px;">Memo</div>
<div style="position:absolute;will-change:transform;top:797.80px;font-size:25px;line-height:28px;height:28px;color:#ffffff;white-space:pre;letter-spacing:0.08px;left:911.30px;">Referal</div>
<div style="position:absolute;will-change:transform;top:863.70px;font-size:25px;line-height:28px;height:28px;color:#ffffff;white-space:pre;letter-spacing:0.13px;left:119.30px;">Deposit</div>
<div style="position:absolute;will-change:transform;top:863.70px;font-size:25px;line-height:28px;height:28px;color:#ffffff;white-space:pre;letter-spacing:-0.03px;left:369.94px;">Withdraw</div>
<div style="position:absolute;will-change:transform;top:863.70px;font-size:25px;line-height:28px;height:28px;color:#ffffff;white-space:pre;letter-spacing:-0.51px;left:642.00px;">Rekening</div>
<div style="position:absolute;will-change:transform;top:863.70px;font-size:25px;line-height:28px;height:28px;color:#ffffff;white-space:pre;letter-spacing:-0.78px;left:899.30px;">Password</div>
<svg style="left:72.5px;top:799.2px" width="22.6" height="23.730000000000004" viewBox="0 0 20 21">
<rect x="2.6" y="0" width="3" height="4" rx="0.6" fill="#ffffff"/><rect x="14.4" y="0" width="3" height="4" rx="0.6" fill="#ffffff"/>
<rect x="0" y="2.2" width="20" height="18.6" rx="1" fill="#ffffff"/>
<rect x="0" y="6.2" width="20" height="1" fill="#666"/>
<rect x="1.60" y="8.60" width="2.3" height="2.3" fill="#666"/><rect x="5.15" y="8.60" width="2.3" height="2.3" fill="#666"/><rect x="8.70" y="8.60" width="2.3" height="2.3" fill="#666"/><rect x="12.25" y="8.60" width="2.3" height="2.3" fill="#666"/><rect x="15.80" y="8.60" width="2.3" height="2.3" fill="#666"/><rect x="1.60" y="12.30" width="2.3" height="2.3" fill="#666"/><rect x="5.15" y="12.30" width="2.3" height="2.3" fill="#666"/><rect x="8.70" y="12.30" width="2.3" height="2.3" fill="#666"/><rect x="12.25" y="12.30" width="2.3" height="2.3" fill="#666"/><rect x="15.80" y="12.30" width="2.3" height="2.3" fill="#666"/><rect x="1.60" y="16.00" width="2.3" height="2.3" fill="#666"/><rect x="5.15" y="16.00" width="2.3" height="2.3" fill="#666"/><rect x="8.70" y="16.00" width="2.3" height="2.3" fill="#666"/><rect x="12.25" y="16.00" width="2.3" height="2.3" fill="#666"/><rect x="15.80" y="16.00" width="2.3" height="2.3" fill="#666"/>
</svg>
<svg style="left:350px;top:799.2px" width="22.6" height="23.730000000000004" viewBox="0 0 20 21">
<rect x="2.6" y="0" width="3" height="4" rx="0.6" fill="#ffffff"/><rect x="14.4" y="0" width="3" height="4" rx="0.6" fill="#ffffff"/>
<rect x="0" y="2.2" width="20" height="18.6" rx="1" fill="#ffffff"/>
<rect x="0" y="6.2" width="20" height="1" fill="#968d82"/>
<rect x="1.60" y="8.60" width="2.3" height="2.3" fill="#968d82"/><rect x="5.15" y="8.60" width="2.3" height="2.3" fill="#968d82"/><rect x="8.70" y="8.60" width="2.3" height="2.3" fill="#968d82"/><rect x="12.25" y="8.60" width="2.3" height="2.3" fill="#968d82"/><rect x="15.80" y="8.60" width="2.3" height="2.3" fill="#968d82"/><rect x="1.60" y="12.30" width="2.3" height="2.3" fill="#968d82"/><rect x="5.15" y="12.30" width="2.3" height="2.3" fill="#968d82"/><rect x="8.70" y="12.30" width="2.3" height="2.3" fill="#968d82"/><rect x="12.25" y="12.30" width="2.3" height="2.3" fill="#968d82"/><rect x="15.80" y="12.30" width="2.3" height="2.3" fill="#968d82"/><rect x="1.60" y="16.00" width="2.3" height="2.3" fill="#968d82"/><rect x="5.15" y="16.00" width="2.3" height="2.3" fill="#968d82"/><rect x="8.70" y="16.00" width="2.3" height="2.3" fill="#968d82"/><rect x="12.25" y="16.00" width="2.3" height="2.3" fill="#968d82"/><rect x="15.80" y="16.00" width="2.3" height="2.3" fill="#968d82"/>
</svg>
<svg style="left:87.5px;top:864.5px" width="22.5" height="23.625" viewBox="0 0 20 21">
<rect x="0" y="15.2" width="19.5" height="5.6" rx="0.8" fill="#ffffff"/>
<rect x="15.6" y="17.3" width="2" height="1.4" fill="#666"/>
<path d="M1.800 3.400 L5.200 0 L11.600 6.400 L16.400 1.800 V13.600 H4.600 L8.400 10 Z" fill="#ffffff"/>
</svg>
<svg style="left:336px;top:864.5px" width="22.5" height="23.625" viewBox="0 0 20 21">
<rect x="0" y="15.2" width="19.5" height="5.6" rx="0.8" fill="#ffffff"/>
<rect x="15.6" y="17.3" width="2" height="1.4" fill="#666"/>
<path d="M7.200 0 H19 V11.800 L14.800 7.600 L8.600 13.800 L5.200 10.400 L11.400 4.200 Z" fill="#ffffff"/>
</svg>
<svg style="left:879.2px;top:799.2px" width="25" height="24.0" viewBox="0 0 25 24">
<ellipse cx="12.500" cy="7.200" rx="5.600" ry="7.200" fill="#ffffff"/>
<path d="M9 11 H16 V15.500 L24 19.800 Q25 20.500 25 22 V24 H0 V22 Q0 20.500 1 19.800 L9 15.500 Z" fill="#ffffff"/>
</svg>
<svg style="left:867.5px;top:864.2px" width="25" height="24.0" viewBox="0 0 25 24">
<ellipse cx="12.500" cy="7.200" rx="5.600" ry="7.200" fill="#ffffff"/>
<path d="M9 11 H16 V15.500 L24 19.800 Q25 20.500 25 22 V24 H0 V22 Q0 20.500 1 19.800 L9 15.500 Z" fill="#ffffff"/>
</svg>
<svg style="left:624px;top:798px" width="30" height="28" viewBox="624 798 30 28">
<path d="M640 804.300 H632.500 Q628 804.300 628 808.800 V816.300 Q628 820.800 632.500 820.800 H642.500 Q647 820.800 647 816.300 V811.500" fill="none" stroke="#fff" stroke-width="3.500" stroke-linecap="butt"/>
<path d="M636.500 815 L637.800 810.600 L647.500 800.900 Q649 799.600 650.500 801 Q652 802.500 650.600 804 L640.900 813.700 Z" fill="#fff"/>
</svg>
<svg style="left:598px;top:850px" width="40" height="40" viewBox="598 850 40 40">
<path d="M616 867.800 H629 Q634.700 867.800 634.700 871 V877.200 H610.300 V871 Q610.300 867.800 616 867.800 Z" fill="#fff"/>
<path d="M610.300 879.300 H634.700 V884 Q634.700 886 632.700 886 H612.300 Q610.300 886 610.300 884 Z" fill="#fff"/>
<path d="M618.300 868 V866 Q618.300 864.800 619.500 864.800 H625.500 Q626.700 864.800 626.700 866 V868" stroke="#fff" stroke-width="2" fill="none"/>
<path d="M608 851 L610.800 856.800 L617.600 857.700 L612.700 862.300 L613.900 868.800 L608 865.600 L602.100 868.800 L603.300 862.300 L598.400 857.700 L605.200 856.800 Z" fill="#f7c81e"/>
<path d="M608 853.500 L609.800 857.800 L614.500 858.400 L608 860 Z" fill="#fbe27a"/>
</svg>
<div class="abs" style="left:26px;top:930px;width:1030px;height:1400px;background:#fff;border-radius:5px 5px 0 0;box-shadow:0 1px 8px rgba(0,0,0,0.2)"></div>
<div class="abs" style="left:26px;top:930px;width:1030px;height:64.500px;background:#e5a802;border-radius:5px 5px 0 0;border-bottom:1.500px solid #3a2c00"></div>
<svg style="left:52px;top:950px" width="22" height="21" viewBox="52 950 22 21">
<g fill="#fff"><rect x="52.500" y="950.500" width="20.800" height="5.700" rx="1.600"/><rect x="52.500" y="957.500" width="20.800" height="5.700" rx="1.600"/><rect x="52.500" y="964.400" width="20.800" height="5.700" rx="1.600"/></g>
<g fill="#e5a802"><rect x="66" y="952.700" width="5" height="1.500" rx="0.700"/><rect x="62" y="959.700" width="9" height="1.500" rx="0.700"/><rect x="66" y="966.600" width="5" height="1.500" rx="0.700"/></g>
</svg>
<div style="position:absolute;will-change:transform;top:949.80px;font-size:21px;line-height:23px;height:23px;color:#fff8d6;white-space:pre;font-weight:700;letter-spacing:-0.77px;left:81.14px;">History Transaksi</div>
<div style="position:absolute;will-change:transform;top:952.00px;font-size:21px;line-height:23px;height:23px;color:#fff8d6;white-space:pre;font-weight:700;letter-spacing:-0.53px;left:610.13px;">Filter</div>
<div class="abs" style="left:688.500px;top:941.500px;width:340px;height:41px;background:#fff;border:1px solid #d6d6d6;border-radius:5px"></div>
<div style="position:absolute;will-change:transform;top:952.40px;font-size:21px;line-height:23px;height:23px;color:#333;white-space:pre;letter-spacing:-0.91px;left:712.55px;">Semua</div>
<svg style="left:1006px;top:955px" width="18" height="12" viewBox="0 0 18 12"><path d="M2.200 4.300 L8.800 10.500 L15.400 4.300" stroke="#333" stroke-width="1.400" fill="none"/></svg>
<div style="position:absolute;will-change:transform;top:1036.00px;font-size:19.5px;line-height:22px;height:22px;color:#333;white-space:pre;font-weight:700;letter-spacing:-0.46px;left:66.81px;">Tanggal</div>
<div style="position:absolute;will-change:transform;top:1036.00px;font-size:19.5px;line-height:22px;height:22px;color:#333;white-space:pre;font-weight:700;letter-spacing:-0.65px;left:184.73px;">Pasaran</div>
<div style="position:absolute;will-change:transform;top:1036.00px;font-size:19.5px;line-height:22px;height:22px;color:#333;white-space:pre;font-weight:700;letter-spacing:-0.27px;left:325.23px;">Deskripsi</div>
<div style="position:absolute;will-change:transform;top:1036.00px;font-size:19.5px;line-height:22px;height:22px;color:#333;white-space:pre;font-weight:700;letter-spacing:1.6px;left:870.73px;">+/-</div>
<div style="position:absolute;will-change:transform;top:1036.00px;font-size:19.5px;line-height:22px;height:22px;color:#333;white-space:pre;font-weight:700;letter-spacing:-0.65px;left:944.75px;">Balance</div>
<div class="abs" style="left:52px;top:1075px;width:977px;height:3px;background:#dddddd"></div>
<div class="row o" style="top:1078px;border-top:none;height:71px"></div>
<div style="position:absolute;will-change:transform;top:1088.90px;font-size:18.7px;line-height:21px;height:21px;color:#41813f;white-space:pre;letter-spacing:-0.3px;left:57.56px;">29 Feb</div>
<div style="position:absolute;will-change:transform;top:1115.80px;font-size:18.7px;line-height:21px;height:21px;color:#41813f;white-space:pre;letter-spacing:-0.13px;left:57.80px;">14:10:26</div>
<div style="position:absolute;will-change:transform;top:1102.50px;font-size:18.7px;line-height:21px;height:21px;color:#3a87ad;white-space:pre;left:176.51px;">-</div>
<div style="position:absolute;will-change:transform;top:1102.50px;font-size:18.7px;line-height:21px;height:21px;color:#2b2b2b;white-space:pre;font-weight:700;letter-spacing:-0.27px;left:318.20px;">Withdraw: PROGRESS BCA (4,200,000)</div>
<div style="position:absolute;will-change:transform;top:1102.50px;font-size:18.7px;line-height:21px;height:21px;color:#b94a48;white-space:pre;letter-spacing:0.07px;left:815.09px;">-4,200,000</div>
<div style="position:absolute;will-change:transform;top:1102.50px;font-size:18.7px;line-height:21px;height:21px;color:#c09853;white-space:pre;letter-spacing:0.55px;left:991.91px;">107</div>
<div class="row" style="top:1149.5px"></div>
<div style="position:absolute;will-change:transform;top:1160.90px;font-size:18.7px;line-height:21px;height:21px;color:#41813f;white-space:pre;letter-spacing:-0.3px;left:57.56px;">29 Feb</div>
<div style="position:absolute;will-change:transform;top:1187.80px;font-size:18.7px;line-height:21px;height:21px;color:#41813f;white-space:pre;letter-spacing:-0.13px;left:57.80px;">14:10:05</div>
<div style="position:absolute;will-change:transform;top:1174.50px;font-size:18.7px;line-height:21px;height:21px;color:#3a87ad;white-space:pre;left:176.51px;">-</div>
<div style="position:absolute;will-change:transform;top:1174.50px;font-size:18.7px;line-height:21px;height:21px;color:#2b2b2b;white-space:pre;font-weight:700;letter-spacing:-0.17px;left:318.20px;">Withdraw: REJECTED BCA (4,000,000)</div>
<div style="position:absolute;will-change:transform;top:1174.50px;font-size:18.7px;line-height:21px;height:21px;color:#3a87ad;white-space:pre;letter-spacing:0.05px;left:810.54px;">+4,000,000</div>
<div style="position:absolute;will-change:transform;top:1174.50px;font-size:18.7px;line-height:21px;height:21px;color:#c09853;white-space:pre;letter-spacing:0.02px;left:940.86px;">4,200,107</div>
<div class="row o" style="top:1221.5px"></div>
<div style="position:absolute;will-change:transform;top:1232.90px;font-size:18.7px;line-height:21px;height:21px;color:#41813f;white-space:pre;letter-spacing:-0.3px;left:57.56px;">29 Feb</div>
<div style="position:absolute;will-change:transform;top:1259.80px;font-size:18.7px;line-height:21px;height:21px;color:#41813f;white-space:pre;letter-spacing:-0.13px;left:57.80px;">14:04:01</div>
<div style="position:absolute;will-change:transform;top:1246.50px;font-size:18.7px;line-height:21px;height:21px;color:#3a87ad;white-space:pre;letter-spacing:0.57px;left:175.80px;">Login-Mobile</div>
<div style="position:absolute;will-change:transform;top:1246.50px;font-size:18.7px;line-height:21px;height:21px;color:#2b2b2b;white-space:pre;font-weight:700;letter-spacing:-0.01px;left:316.98px;">Login: Mobile</div>
<div style="position:absolute;will-change:transform;top:1246.50px;font-size:18.7px;line-height:21px;height:21px;color:#333;white-space:pre;left:894.72px;">0</div>
<div style="position:absolute;will-change:transform;top:1246.50px;font-size:18.7px;line-height:21px;height:21px;color:#c09853;white-space:pre;letter-spacing:0.13px;left:955.85px;">200,107</div>
<div class="row" style="top:1293.5px"></div>
<div style="position:absolute;will-change:transform;top:1304.90px;font-size:18.7px;line-height:21px;height:21px;color:#41813f;white-space:pre;letter-spacing:-0.3px;left:57.56px;">29 Feb</div>
<div style="position:absolute;will-change:transform;top:1331.80px;font-size:18.7px;line-height:21px;height:21px;color:#41813f;white-space:pre;letter-spacing:-0.13px;left:57.80px;">13:58:54</div>
<div style="position:absolute;will-change:transform;top:1318.50px;font-size:18.7px;line-height:21px;height:21px;color:#3a87ad;white-space:pre;letter-spacing:0.57px;left:175.80px;">Login-Mobile</div>
<div style="position:absolute;will-change:transform;top:1318.50px;font-size:18.7px;line-height:21px;height:21px;color:#2b2b2b;white-space:pre;font-weight:700;letter-spacing:-0.01px;left:316.98px;">Login: Mobile</div>
<div style="position:absolute;will-change:transform;top:1318.50px;font-size:18.7px;line-height:21px;height:21px;color:#333;white-space:pre;left:894.72px;">0</div>
<div style="position:absolute;will-change:transform;top:1318.50px;font-size:18.7px;line-height:21px;height:21px;color:#c09853;white-space:pre;letter-spacing:0.13px;left:955.85px;">200,107</div>
<div class="row o" style="top:1365.5px"></div>
<div style="position:absolute;will-change:transform;top:1376.90px;font-size:18.7px;line-height:21px;height:21px;color:#41813f;white-space:pre;letter-spacing:-0.3px;left:57.56px;">29 Feb</div>
<div style="position:absolute;will-change:transform;top:1403.80px;font-size:18.7px;line-height:21px;height:21px;color:#41813f;white-space:pre;letter-spacing:-0.13px;left:57.80px;">13:56:15</div>
<div style="position:absolute;will-change:transform;top:1390.50px;font-size:18.7px;line-height:21px;height:21px;color:#3a87ad;white-space:pre;letter-spacing:0.57px;left:175.80px;">Login-Mobile</div>
<div style="position:absolute;will-change:transform;top:1390.50px;font-size:18.7px;line-height:21px;height:21px;color:#2b2b2b;white-space:pre;font-weight:700;letter-spacing:-0.01px;left:316.98px;">Login: Mobile</div>
<div style="position:absolute;will-change:transform;top:1390.50px;font-size:18.7px;line-height:21px;height:21px;color:#333;white-space:pre;left:894.72px;">0</div>
<div style="position:absolute;will-change:transform;top:1390.50px;font-size:18.7px;line-height:21px;height:21px;color:#c09853;white-space:pre;letter-spacing:0.13px;left:955.85px;">200,107</div>
<div class="row" style="top:1437.5px"></div>
<div style="position:absolute;will-change:transform;top:1448.90px;font-size:18.7px;line-height:21px;height:21px;color:#41813f;white-space:pre;letter-spacing:-0.3px;left:57.56px;">29 Feb</div>
<div style="position:absolute;will-change:transform;top:1475.80px;font-size:18.7px;line-height:21px;height:21px;color:#41813f;white-space:pre;letter-spacing:-0.13px;left:57.80px;">13:47:56</div>
<div style="position:absolute;will-change:transform;top:1462.50px;font-size:18.7px;line-height:21px;height:21px;color:#3a87ad;white-space:pre;letter-spacing:0.57px;left:175.80px;">Login-Mobile</div>
<div style="position:absolute;will-change:transform;top:1462.50px;font-size:18.7px;line-height:21px;height:21px;color:#2b2b2b;white-space:pre;font-weight:700;letter-spacing:-0.01px;left:316.98px;">Login: Mobile</div>
<div style="position:absolute;will-change:transform;top:1462.50px;font-size:18.7px;line-height:21px;height:21px;color:#333;white-space:pre;left:894.72px;">0</div>
<div style="position:absolute;will-change:transform;top:1462.50px;font-size:18.7px;line-height:21px;height:21px;color:#c09853;white-space:pre;letter-spacing:0.13px;left:955.85px;">200,107</div>
<div class="row o" style="top:1509.5px"></div>
<div style="position:absolute;will-change:transform;top:1520.90px;font-size:18.7px;line-height:21px;height:21px;color:#41813f;white-space:pre;letter-spacing:-0.3px;left:57.56px;">29 Feb</div>
<div style="position:absolute;will-change:transform;top:1547.80px;font-size:18.7px;line-height:21px;height:21px;color:#41813f;white-space:pre;letter-spacing:-0.13px;left:57.80px;">13:29:03</div>
<div style="position:absolute;will-change:transform;top:1534.50px;font-size:18.7px;line-height:21px;height:21px;color:#3a87ad;white-space:pre;letter-spacing:0.57px;left:175.80px;">Login-Mobile</div>
<div style="position:absolute;will-change:transform;top:1534.50px;font-size:18.7px;line-height:21px;height:21px;color:#2b2b2b;white-space:pre;font-weight:700;letter-spacing:-0.01px;left:316.98px;">Login: Mobile</div>
<div style="position:absolute;will-change:transform;top:1534.50px;font-size:18.7px;line-height:21px;height:21px;color:#333;white-space:pre;left:894.72px;">0</div>
<div style="position:absolute;will-change:transform;top:1534.50px;font-size:18.7px;line-height:21px;height:21px;color:#c09853;white-space:pre;letter-spacing:0.13px;left:955.85px;">200,107</div>
<div class="row" style="top:1581.5px"></div>
<div style="position:absolute;will-change:transform;top:1592.90px;font-size:18.7px;line-height:21px;height:21px;color:#41813f;white-space:pre;letter-spacing:-0.3px;left:57.56px;">29 Feb</div>
<div style="position:absolute;will-change:transform;top:1619.80px;font-size:18.7px;line-height:21px;height:21px;color:#41813f;white-space:pre;letter-spacing:-0.13px;left:57.80px;">13:17:46</div>
<div style="position:absolute;will-change:transform;top:1606.50px;font-size:18.7px;line-height:21px;height:21px;color:#3a87ad;white-space:pre;letter-spacing:0.57px;left:175.80px;">Login-Mobile</div>
<div style="position:absolute;will-change:transform;top:1606.50px;font-size:18.7px;line-height:21px;height:21px;color:#2b2b2b;white-space:pre;font-weight:700;letter-spacing:-0.01px;left:316.98px;">Login: Mobile</div>
<div style="position:absolute;will-change:transform;top:1606.50px;font-size:18.7px;line-height:21px;height:21px;color:#333;white-space:pre;left:894.72px;">0</div>
<div style="position:absolute;will-change:transform;top:1606.50px;font-size:18.7px;line-height:21px;height:21px;color:#c09853;white-space:pre;letter-spacing:0.13px;left:955.85px;">200,107</div>
<div class="row o" style="top:1653.5px"></div>
<div style="position:absolute;will-change:transform;top:1664.90px;font-size:18.7px;line-height:21px;height:21px;color:#41813f;white-space:pre;letter-spacing:-0.3px;left:57.56px;">29 Feb</div>
<div style="position:absolute;will-change:transform;top:1691.80px;font-size:18.7px;line-height:21px;height:21px;color:#41813f;white-space:pre;letter-spacing:-0.13px;left:57.80px;">13:07:37</div>
<div style="position:absolute;will-change:transform;top:1678.50px;font-size:18.7px;line-height:21px;height:21px;color:#3a87ad;white-space:pre;letter-spacing:0.57px;left:175.80px;">Login-Mobile</div>
<div style="position:absolute;will-change:transform;top:1678.50px;font-size:18.7px;line-height:21px;height:21px;color:#2b2b2b;white-space:pre;font-weight:700;letter-spacing:-0.01px;left:316.98px;">Login: Mobile</div>
<div style="position:absolute;will-change:transform;top:1678.50px;font-size:18.7px;line-height:21px;height:21px;color:#333;white-space:pre;left:894.72px;">0</div>
<div style="position:absolute;will-change:transform;top:1678.50px;font-size:18.7px;line-height:21px;height:21px;color:#c09853;white-space:pre;letter-spacing:0.13px;left:955.85px;">200,107</div>
<div class="row" style="top:1725.5px"></div>
<div style="position:absolute;will-change:transform;top:1736.90px;font-size:18.7px;line-height:21px;height:21px;color:#41813f;white-space:pre;letter-spacing:-0.3px;left:57.56px;">29 Feb</div>
<div style="position:absolute;will-change:transform;top:1763.80px;font-size:18.7px;line-height:21px;height:21px;color:#41813f;white-space:pre;letter-spacing:-0.13px;left:57.80px;">12:58:33</div>
<div style="position:absolute;will-change:transform;top:1750.50px;font-size:18.7px;line-height:21px;height:21px;color:#3a87ad;white-space:pre;letter-spacing:0.57px;left:175.80px;">Login-Mobile</div>
<div style="position:absolute;will-change:transform;top:1750.50px;font-size:18.7px;line-height:21px;height:21px;color:#2b2b2b;white-space:pre;font-weight:700;letter-spacing:-0.01px;left:316.98px;">Login: Mobile</div>
<div style="position:absolute;will-change:transform;top:1750.50px;font-size:18.7px;line-height:21px;height:21px;color:#333;white-space:pre;left:894.72px;">0</div>
<div style="position:absolute;will-change:transform;top:1750.50px;font-size:18.7px;line-height:21px;height:21px;color:#c09853;white-space:pre;letter-spacing:0.13px;left:955.85px;">200,107</div>
<div class="row o" style="top:1797.5px"></div>
<div style="position:absolute;will-change:transform;top:1808.90px;font-size:18.7px;line-height:21px;height:21px;color:#41813f;white-space:pre;letter-spacing:-0.3px;left:57.56px;">29 Feb</div>
<div style="position:absolute;will-change:transform;top:1835.80px;font-size:18.7px;line-height:21px;height:21px;color:#41813f;white-space:pre;letter-spacing:-0.13px;left:57.80px;">12:56:21</div>
<div style="position:absolute;will-change:transform;top:1822.50px;font-size:18.7px;line-height:21px;height:21px;color:#3a87ad;white-space:pre;letter-spacing:0.57px;left:175.80px;">Login-Mobile</div>
<div style="position:absolute;will-change:transform;top:1822.50px;font-size:18.7px;line-height:21px;height:21px;color:#2b2b2b;white-space:pre;font-weight:700;letter-spacing:-0.01px;left:316.98px;">Login: Mobile</div>
<div style="position:absolute;will-change:transform;top:1822.50px;font-size:18.7px;line-height:21px;height:21px;color:#333;white-space:pre;left:894.72px;">0</div>
<div style="position:absolute;will-change:transform;top:1822.50px;font-size:18.7px;line-height:21px;height:21px;color:#c09853;white-space:pre;letter-spacing:0.13px;left:955.85px;">200,107</div>
<div class="row" style="top:1869.5px"></div>
<div style="position:absolute;will-change:transform;top:1880.90px;font-size:18.7px;line-height:21px;height:21px;color:#41813f;white-space:pre;letter-spacing:-0.3px;left:57.56px;">29 Feb</div>
<div style="position:absolute;will-change:transform;top:1907.80px;font-size:18.7px;line-height:21px;height:21px;color:#41813f;white-space:pre;letter-spacing:-0.13px;left:57.80px;">12:56:18</div>
<div style="position:absolute;will-change:transform;top:1894.50px;font-size:18.7px;line-height:21px;height:21px;color:#3a87ad;white-space:pre;letter-spacing:0.65px;left:175.80px;">Logout-Mobile</div>
<div style="position:absolute;will-change:transform;top:1894.50px;font-size:18.7px;line-height:21px;height:21px;color:#2b2b2b;white-space:pre;font-weight:700;letter-spacing:0.14px;left:316.98px;">Logout: Mobile</div>
<div style="position:absolute;will-change:transform;top:1894.50px;font-size:18.7px;line-height:21px;height:21px;color:#333;white-space:pre;left:894.72px;">0</div>
<div style="position:absolute;will-change:transform;top:1894.50px;font-size:18.7px;line-height:21px;height:21px;color:#c09853;white-space:pre;letter-spacing:0.13px;left:955.85px;">200,107</div>
<div class="row o" style="top:1941.5px"></div>
<div style="position:absolute;will-change:transform;top:1952.90px;font-size:18.7px;line-height:21px;height:21px;color:#41813f;white-space:pre;letter-spacing:-0.3px;left:57.56px;">29 Feb</div>
<div style="position:absolute;will-change:transform;top:1979.80px;font-size:18.7px;line-height:21px;height:21px;color:#41813f;white-space:pre;letter-spacing:-0.13px;left:57.80px;">12:55:52</div>
<div style="position:absolute;will-change:transform;top:1966.50px;font-size:18.7px;line-height:21px;height:21px;color:#3a87ad;white-space:pre;letter-spacing:0.57px;left:175.80px;">Login-Mobile</div>
<div style="position:absolute;will-change:transform;top:1966.50px;font-size:18.7px;line-height:21px;height:21px;color:#2b2b2b;white-space:pre;font-weight:700;letter-spacing:-0.01px;left:316.98px;">Login: Mobile</div>
<div style="position:absolute;will-change:transform;top:1966.50px;font-size:18.7px;line-height:21px;height:21px;color:#333;white-space:pre;left:894.72px;">0</div>
<div style="position:absolute;will-change:transform;top:1966.50px;font-size:18.7px;line-height:21px;height:21px;color:#c09853;white-space:pre;letter-spacing:0.13px;left:955.85px;">200,107</div>
<div class="row" style="top:2013.5px"></div>
<div style="position:absolute;will-change:transform;top:2024.90px;font-size:18.7px;line-height:21px;height:21px;color:#41813f;white-space:pre;letter-spacing:-0.3px;left:57.56px;">29 Feb</div>
<div style="position:absolute;will-change:transform;top:2051.80px;font-size:18.7px;line-height:21px;height:21px;color:#41813f;white-space:pre;letter-spacing:-0.13px;left:57.80px;">12:55:07</div>
<div style="position:absolute;will-change:transform;top:2038.50px;font-size:18.7px;line-height:21px;height:21px;color:#3a87ad;white-space:pre;letter-spacing:0.65px;left:175.80px;">Logout-Mobile</div>
<div style="position:absolute;will-change:transform;top:2038.50px;font-size:18.7px;line-height:21px;height:21px;color:#2b2b2b;white-space:pre;font-weight:700;letter-spacing:0.14px;left:316.98px;">Logout: Mobile</div>
<div style="position:absolute;will-change:transform;top:2038.50px;font-size:18.7px;line-height:21px;height:21px;color:#333;white-space:pre;left:894.72px;">0</div>
<div style="position:absolute;will-change:transform;top:2038.50px;font-size:18.7px;line-height:21px;height:21px;color:#c09853;white-space:pre;letter-spacing:0.13px;left:955.85px;">200,107</div>
<div class="row o" style="top:2085.5px"></div>
<div style="position:absolute;will-change:transform;top:2096.90px;font-size:18.7px;line-height:21px;height:21px;color:#41813f;white-space:pre;letter-spacing:-0.3px;left:57.56px;">29 Feb</div>
<div style="position:absolute;will-change:transform;top:2123.80px;font-size:18.7px;line-height:21px;height:21px;color:#41813f;white-space:pre;letter-spacing:-0.13px;left:57.80px;">12:54:41</div>
<div style="position:absolute;will-change:transform;top:2110.50px;font-size:18.7px;line-height:21px;height:21px;color:#3a87ad;white-space:pre;left:176.51px;">-</div>
<div style="position:absolute;will-change:transform;top:2110.50px;font-size:18.7px;line-height:21px;height:21px;color:#2b2b2b;white-space:pre;font-weight:700;letter-spacing:-0.13px;left:316.98px;">Deposit: REJECTED BCA (30,000,000)</div>
<div style="position:absolute;will-change:transform;top:2110.50px;font-size:18.7px;line-height:21px;height:21px;color:#333;white-space:pre;left:894.72px;">0</div>
<div style="position:absolute;will-change:transform;top:2110.50px;font-size:18.7px;line-height:21px;height:21px;color:#c09853;white-space:pre;letter-spacing:0.13px;left:955.85px;">200,107</div>
<div class="row" style="top:2157.5px"></div>
<div style="position:absolute;will-change:transform;top:2168.90px;font-size:18.7px;line-height:21px;height:21px;color:#41813f;white-space:pre;letter-spacing:-0.3px;left:57.56px;">29 Feb</div>
<div style="position:absolute;will-change:transform;top:2195.80px;font-size:18.7px;line-height:21px;height:21px;color:#41813f;white-space:pre;letter-spacing:-0.13px;left:57.80px;">12:54:12</div>
<div style="position:absolute;will-change:transform;top:2182.50px;font-size:18.7px;line-height:21px;height:21px;color:#3a87ad;white-space:pre;letter-spacing:0.65px;left:175.80px;">Logout-Mobile</div>
<div style="position:absolute;will-change:transform;top:2182.50px;font-size:18.7px;line-height:21px;height:21px;color:#2b2b2b;white-space:pre;font-weight:700;letter-spacing:0.14px;left:316.98px;">Logout: Mobile</div>
<div style="position:absolute;will-change:transform;top:2182.50px;font-size:18.7px;line-height:21px;height:21px;color:#333;white-space:pre;left:894.72px;">0</div>
<div style="position:absolute;will-change:transform;top:2182.50px;font-size:18.7px;line-height:21px;height:21px;color:#c09853;white-space:pre;letter-spacing:0.13px;left:955.85px;">200,107</div>
<div class="row o" style="top:2229.5px"></div>
<div style="position:absolute;will-change:transform;top:2240.90px;font-size:18.7px;line-height:21px;height:21px;color:#41813f;white-space:pre;letter-spacing:-0.3px;left:57.56px;">29 Feb</div>
<div style="position:absolute;will-change:transform;top:2267.80px;font-size:18.7px;line-height:21px;height:21px;color:#41813f;white-space:pre;letter-spacing:-0.13px;left:57.80px;">12:53:40</div>
<div style="position:absolute;will-change:transform;top:2254.50px;font-size:18.7px;line-height:21px;height:21px;color:#3a87ad;white-space:pre;letter-spacing:0.57px;left:175.80px;">Login-Mobile</div>
<div style="position:absolute;will-change:transform;top:2254.50px;font-size:18.7px;line-height:21px;height:21px;color:#2b2b2b;white-space:pre;font-weight:700;letter-spacing:-0.01px;left:316.98px;">Login: Mobile</div>
<div style="position:absolute;will-change:transform;top:2254.50px;font-size:18.7px;line-height:21px;height:21px;color:#333;white-space:pre;left:894.72px;">0</div>
<div style="position:absolute;will-change:transform;top:2254.50px;font-size:18.7px;line-height:21px;height:21px;color:#c09853;white-space:pre;letter-spacing:0.13px;left:955.85px;">200,107</div>
<div class="abs" style="left:0;top:2181.500px;width:1080px;height:84.500px;background:#fff;box-shadow:0 -2px 13px rgba(0,0,0,0.36);border-bottom:1.500px solid #c4c4c4;border-top:1px solid #e6e6e6"></div>
<div class="abs" style="left:360px;top:2182px;width:1.500px;height:82px;background:#e4e4e4"></div>
<div class="abs" style="left:720px;top:2182px;width:1.500px;height:82px;background:#e4e4e4"></div>
<div class="abs" style="left:0;top:2182px;width:1.500px;height:82px;background:#e4e4e4"></div>
<div style="position:absolute;will-change:transform;top:2203.50px;font-size:31.5px;line-height:36px;height:36px;color:#333;white-space:pre;font-weight:700;letter-spacing:-0.63px;left:135.00px;">WhatsApp</div>
<div style="position:absolute;will-change:transform;top:2203.50px;font-size:31.5px;line-height:36px;height:36px;color:#333;white-space:pre;font-weight:700;letter-spacing:-0.79px;left:510.45px;">Promosi</div>
<div style="position:absolute;will-change:transform;top:2203.50px;font-size:31.5px;line-height:36px;height:36px;color:#333;white-space:pre;font-weight:700;letter-spacing:-0.7px;left:866.70px;">LiveChat</div>
<svg style="left:78px;top:2198px" width="46" height="46" viewBox="78 2198 46 46">
<path d="M101.500 2202.700 A17.300 17.300 0 1 1 92.300 2234.600 L82.800 2238.500 L86.300 2228.700 A17.300 17.300 0 0 1 101.500 2202.700 Z" fill="none" stroke="#1c1c1c" stroke-width="3.200" stroke-linejoin="round"/>
<path d="M94.500 2210.500 Q96.300 2209.300 97.200 2211.300 L98.700 2214.600 Q99.200 2215.800 98.200 2216.800 L97 2218.100 Q99.600 2223.300 104.800 2225.600 L106.300 2224 Q107.200 2223.200 108.300 2223.700 L111.400 2225.400 Q112.900 2226.300 112 2228 Q110.300 2231.200 106.500 2230.500 Q95.500 2227.500 92.200 2216 Q91.700 2212.500 94.500 2210.500 Z" fill="#1c1c1c"/>
</svg>
<svg style="left:456px;top:2198px" width="42" height="46" viewBox="456 2198 42 46">
<defs><linearGradient id="gf" x1="0" y1="0" x2="0" y2="1"><stop offset="0" stop-color="#0a0a0a"/><stop offset="1" stop-color="#4a4a4a"/></linearGradient></defs>
<path d="M458 2213.500 Q458 2211.300 460 2211.300 H494 Q496 2211.300 496 2213.500 V2223.200 H493 V2240 Q493 2242 491 2242 H463.300 Q461.300 2242 461.300 2240 V2223.200 H458 Z" fill="url(#gf)"/>
<path d="M476 2211 Q468 2210 465.500 2206 Q464.500 2202 468.500 2201.500 Q474.500 2202.500 476.800 2210 Q479.200 2202.500 485.200 2201.500 Q489.200 2202 488.200 2206 Q485.700 2210 477.700 2211 Z" fill="none" stroke="#0a0a0a" stroke-width="2.800" stroke-linejoin="round"/>
<rect x="473.800" y="2212.300" width="6.200" height="27" fill="#fff"/>
<rect x="458" y="2222.700" width="38" height="1" fill="#2a2a2a" opacity="0.6"/>
</svg>
<svg style="left:808px;top:2198px" width="50" height="46" viewBox="808 2198 50 46">
<path d="M846 2214 Q855 2217 854.300 2225 Q853.500 2231.500 847.500 2234.500 L849.500 2240.700 L841.500 2236.500 Q832.500 2237 829 2231.500 Q846.500 2231.500 846 2214 Z" fill="#333"/>
<path d="M828.800 2202.700 Q845 2202.700 845 2214.200 Q845 2225.700 828.800 2225.700 Q826 2225.700 823.500 2225.200 L815.500 2232 L817.500 2223.300 Q812.500 2220 812.500 2214.200 Q812.500 2202.700 828.800 2202.700 Z" fill="#fff" stroke="#1a1a1a" stroke-width="3" stroke-linejoin="round"/>
<circle cx="821" cy="2214.300" r="2.500" fill="#1a1a1a"/><circle cx="828.800" cy="2214.300" r="2.500" fill="#1a1a1a"/><circle cx="836.600" cy="2214.300" r="2.500" fill="#1a1a1a"/>
</svg>
<div class="abs" style="left:0;top:2266px;width:1080px;height:8px;background:linear-gradient(#f7f7f7,#e2e2e2 55%,#cdcdcd)"></div>
<div class="abs" style="left:0;top:2274px;width:1080px;height:126px;background:#2e2f33;border-top:3px solid #43464a"></div>
<svg style="left:200px;top:2300px" width="700" height="70" viewBox="200 2300 700 70">
<g fill="#b9b9bb"><rect x="221.500" y="2316.500" width="3.600" height="40" rx="1.500"/><rect x="238.500" y="2316.500" width="3.600" height="40" rx="1.500"/><rect x="255.500" y="2316.500" width="3.600" height="40" rx="1.500"/></g>
<rect x="524" y="2319" width="36" height="37" rx="12.500" fill="none" stroke="#b9b9bb" stroke-width="4"/>
<path d="M855.500 2317.500 L836.500 2337 L855.500 2356.500" fill="none" stroke="#b9b9bb" stroke-width="4" stroke-linecap="round" stroke-linejoin="round"/>
</svg>
</body></html>
